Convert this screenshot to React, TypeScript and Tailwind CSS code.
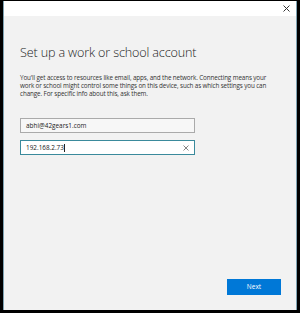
export default function App() {
  return (
    <div className="w-[300px] h-[313px] bg-black pt-px pl-[3px] pr-[3px] pb-[3px] overflow-hidden">
      <div
        className="h-full flex flex-col border-l border-r border-[#7fa3b3] bg-[#f2f2f2]"
        style={{ fontFamily: '"Open Sans", "Noto Sans", sans-serif' }}
      >
        {/* Title bar */}
        <div className="h-[15px] bg-white flex justify-end items-center pr-[6px]">
          <svg width="7" height="7" viewBox="0 0 7 7">
            <path d="M0.5 0.5 L6.5 6.5 M6.5 0.5 L0.5 6.5" stroke="#333" strokeWidth="1" />
          </svg>
        </div>

        <div className="flex-1 flex flex-col px-[16px] pt-[29px]">
          <h1 className="text-[12.6px] font-light text-[#222] leading-[16px] tracking-[-0.15px]">
            Set up a work or school account
          </h1>
          <p className="mt-[13px] text-[6.3px] leading-[7.8px] text-[#333] tracking-[-0.12px]">
            You'll get access to resources like email, apps, and the network. Connecting means your work or school might control some things on this device, such as which settings you can change. For specific info about this, ask them.
          </p>

          <div className="mt-[21px] w-[175px] h-[15px] border border-[#aaa] bg-[#f7f7f7] flex items-center px-[5px]">
            <span className="text-[6.4px] text-[#222]">abhi@42gears1.com</span>
          </div>
          <div className="mt-[7px] w-[175px] h-[15px] border border-[#3a8a9c] bg-white flex items-center px-[5px]">
            <span className="text-[6.4px] text-[#222]">192.168.2.73</span>
            <span className="w-px h-[8px] bg-[#222]" />
            <span className="flex-1" />
            <svg width="6" height="6" viewBox="0 0 6 6">
              <path d="M0.5 0.5 L5.5 5.5 M5.5 0.5 L0.5 5.5" stroke="#666" strokeWidth="0.8" />
            </svg>
          </div>

          <div className="flex-1" />
          <div className="flex justify-end -mr-px pb-[15px]">
            <button className="w-[54px] h-[16px] bg-[#0078d7] text-white text-[6.5px] flex items-center justify-center">
              Next
            </button>
          </div>
        </div>
      </div>
    </div>
  );
}
